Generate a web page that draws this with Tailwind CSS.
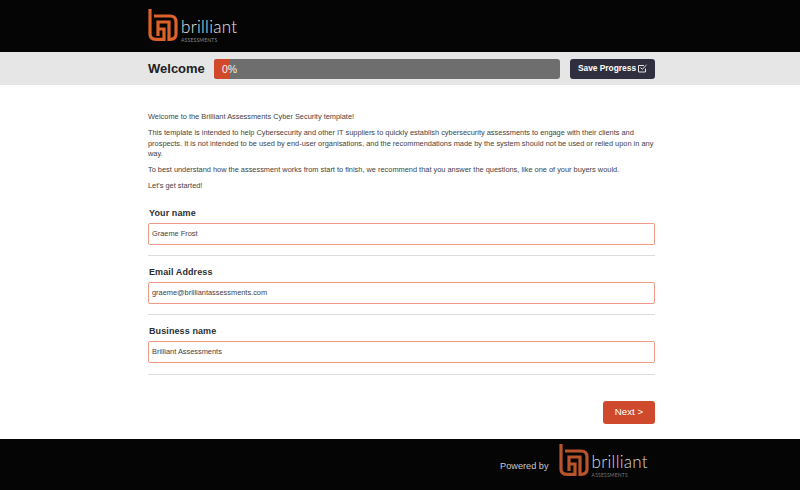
<!DOCTYPE html>
<html lang="en">
<head>
    <meta charset="UTF-8">
    <title>Brilliant Assessments</title>
    <script src="https://cdn.jsdelivr.net/npm/@tailwindcss/browser@4"></script>
</head>
<body class="bg-white font-['Liberation_Sans',Arial,sans-serif] text-[#373a3c]">

<!-- Header -->
<header class="h-[52px] bg-[#050505]">
    <div class="w-[507px] ml-[148px] flex items-start pt-[9px]">
        <svg width="30" height="32" viewBox="0 0 30 32" fill="none" stroke="#dc6229" stroke-width="3.2" class="shrink-0">
            <path d="M2 0V25Q2 30.400 8 30.400H16V20H10"/>
            <path d="M10 27V13H21V30.400H22Q28 30.400 28 25V13Q28 7 22 7H6"/>
        </svg>
        <div class="ml-[3px] mt-[9px] flex flex-col antialiased">
            <span class="font-['Lato',sans-serif] font-light text-[17px] leading-[17px] tracking-[0.3px] text-[#e4e4e4]">brilliant</span>
            <span class="mt-[2px] font-['Lato',sans-serif] text-[5px] leading-[6px] tracking-[0.2px] text-[#8b8b8b]">ASSESSMENTS</span>
        </div>
    </div>
</header>

<!-- Progress bar -->
<section class="h-[33px] bg-[#e6e6e6]">
    <div class="w-[507px] ml-[148px] h-full flex items-center">
        <h1 class="w-[66px] font-bold text-[13px] text-[#212121]">Welcome</h1>
        <div class="w-[346px] h-[20px] bg-[#6e6e6e] rounded-[3px] overflow-hidden relative">
            <div class="w-[15px] h-full bg-[#d2492a]"></div>
            <span class="absolute left-[8px] top-0 text-[10.5px] leading-[20px] text-[#f1f1f1]">0%</span>
        </div>
        <button class="ml-[10px] w-[85px] h-[20px] bg-[#2f2f3f] rounded-[3px] text-white text-[8.4px] font-bold flex items-center justify-center gap-[2px]">
            Save Progress
            <svg width="9" height="9" viewBox="0 0 9 9" fill="none" stroke="#e4e4e4" stroke-width="1"><path d="M7.500 4.500V8H.5V1.500H6"/><path d="M2.500 3.500L4.200 5.300L8.500 1"/></svg>
        </button>
    </div>
</section>

<!-- Main -->
<main class="w-[507px] ml-[148px] pt-[27px] text-[7.4px] leading-[10.5px] text-[#3f4144]">
    <p class="mb-[5.5px]">Welcome to the Brilliant Assessments Cyber Security template!</p>
    <p class="mb-[5.5px]">This template is intended to help Cybersecurity and other IT suppliers to quickly establish cybersecurity assessments to engage with their clients and prospects. It is not intended to be used by end-user organisations, and the recommendations made by the system should not be used or relied upon in any way.</p>
    <p class="mb-[5.5px]">To best understand how the assessment works from start to finish, we recommend that you answer the questions, like one of your buyers would.</p>
    <p>Let's get started!</p>

    <form class="mt-[15px]">
        <div class="border-b border-[#dcdcdc] pb-[10px] mb-[10px]">
            <label class="block ml-[1px] mb-[4px] text-[9px] leading-[12px] tracking-[0.1px] font-bold text-[#2b2f33]">Your name</label>
            <input value="Graeme Frost" class="block w-full h-[22px] px-[3px] border border-[#ee9a86] rounded-[2px] text-[7.4px] text-[#3f4144]">
        </div>
        <div class="border-b border-[#dcdcdc] pb-[10px] mb-[10px]">
            <label class="block ml-[1px] mb-[4px] text-[9px] leading-[12px] tracking-[0.1px] font-bold text-[#2b2f33]">Email Address</label>
            <input value="graeme@brilliantassessments.com" class="block w-full h-[22px] px-[3px] border border-[#ee9a86] rounded-[2px] text-[7.4px] text-[#3f4144]">
        </div>
        <div class="border-b border-[#dcdcdc] pb-[11px]">
            <label class="block ml-[1px] mb-[4px] text-[9px] leading-[12px] tracking-[0.1px] font-bold text-[#2b2f33]">Business name</label>
            <input value="Brilliant Assessments" class="block w-full h-[22px] px-[3px] border border-[#ee9a86] rounded-[2px] text-[7.4px] text-[#3f4144]">
        </div>
        <div class="flex justify-end mt-[26px]">
            <button type="button" class="w-[52px] h-[23px] bg-[#cf4a2c] rounded-[3px] text-white text-[9.7px]">Next &gt;</button>
        </div>
    </form>
</main>

<!-- Footer -->
<footer class="mt-[15px] h-[51px] bg-[#050505] flex justify-end pr-[152px] pt-[5px]">
    <span class="mt-[16px] mr-[10px] text-[9.2px] leading-[12px] text-[#c9c9c9]">Powered by</span>
    <svg width="30" height="32" viewBox="0 0 30 32" fill="none" stroke="#b9542a" stroke-width="3.2" class="shrink-0">
        <path d="M2 0V25Q2 30.400 8 30.400H16V20H10"/>
        <path d="M10 27V13H21V30.400H22Q28 30.400 28 25V13Q28 7 22 7H6"/>
    </svg>
    <div class="ml-[3px] mt-[9px] flex flex-col antialiased">
        <span class="font-['Lato',sans-serif] font-light text-[17px] leading-[17px] tracking-[0.3px] text-[#d8d8d8]">brilliant</span>
        <span class="mt-[2px] font-['Lato',sans-serif] text-[5px] leading-[6px] tracking-[0.2px] text-[#777]">ASSESSMENTS</span>
    </div>
</footer>
</body>
</html>
